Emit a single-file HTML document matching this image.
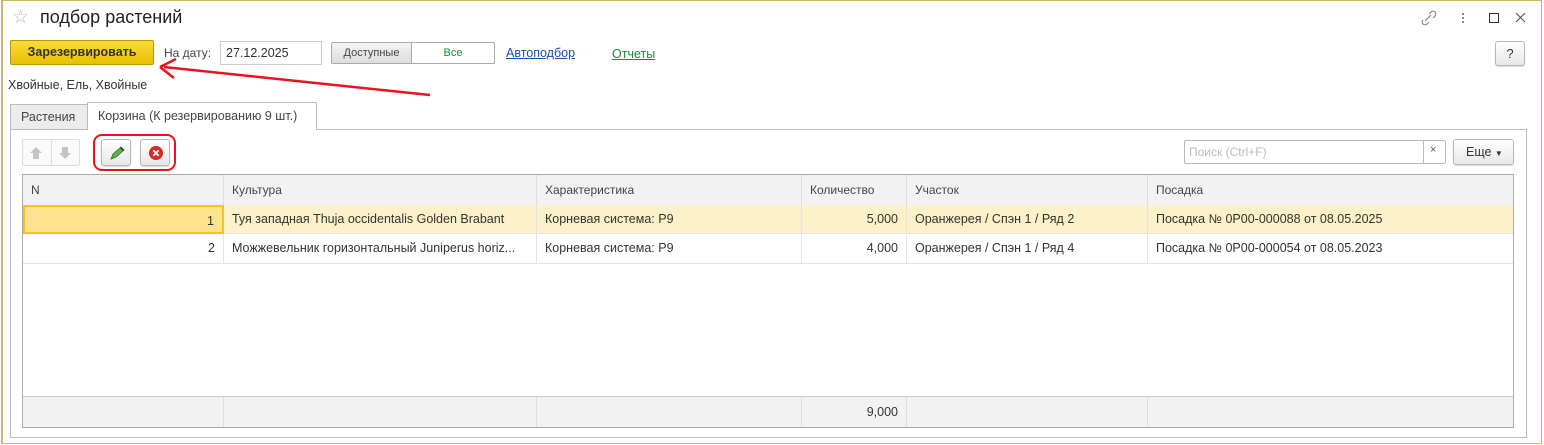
<!DOCTYPE html>
<html><head><meta charset="utf-8"><style>
*{box-sizing:border-box;margin:0;padding:0}
body{width:1544px;height:445px;background:#fff;font-family:"Liberation Sans",sans-serif;font-size:12px;color:#333;position:relative;overflow:hidden}
.a{position:absolute}
.win{left:1px;top:0;width:1541px;height:444px;border:1px solid #c9b865;border-left-width:2px}
.btn{border:1px solid #b8b8b8;border-radius:3px;background:linear-gradient(#fff,#e8e8e8);box-shadow:0 1px 1px rgba(0,0,0,.15)}
.th{position:absolute;top:0;height:30px;line-height:30px;padding-left:8px;border-right:1px solid #ddd;color:#444;background:#f2f2f2}
.td{position:absolute;height:29px;line-height:29px;padding:0 8px;border-right:1px solid #e4e4e4;white-space:nowrap;overflow:hidden;color:#333;font-size:12.5px}
.r{text-align:right}
</style></head><body>
<div class="a win"></div>
<div class="a" style="left:12px;top:6px;font-size:19px;color:#bbb">☆</div>
<div class="a" style="left:40px;top:7px;font-size:18px;color:#222">подбор растений</div>
<svg class="a" style="left:1420px;top:8px" width="110" height="20">
<g fill="none" stroke="#888" stroke-width="1.2"><path d="M5 13l6-6M3 12a2.5 2.5 0 0 0 4 4l2-2M9 6l2-2a2.5 2.5 0 0 1 4 4l-2 2"/></g>
<g fill="#888"><rect x="42" y="5" width="2" height="2"/><rect x="42" y="9" width="2" height="2"/><rect x="42" y="13" width="2" height="2"/></g>
<rect x="69.5" y="5.5" width="9" height="9" fill="none" stroke="#333"/>
<path d="M96 5l9 9M105 5l-9 9" stroke="#555" stroke-width="1.1"/>
</svg>
<div class="a" style="left:10px;top:40px;width:144px;height:25px;border:1px solid #b39a00;border-radius:2px;background:linear-gradient(#f8dc3a,#e8c000);font-weight:bold;font-size:12.5px;line-height:23px;text-align:center;color:#333">Зарезервировать</div>
<div class="a" style="left:164px;top:46px;color:#444">На дату:</div>
<div class="a" style="left:220px;top:41px;width:102px;height:24px;border:1px solid #ccc;padding-left:5px;line-height:22px;font-size:12.5px">27.12.2025</div>
<div class="a" style="left:331px;top:42px;width:164px;height:22px;border:1px solid #aaa;border-radius:2px;font-size:11px;line-height:20px">
<div class="a" style="left:0;top:0;width:80px;height:20px;background:linear-gradient(#f4f4f4,#ddd);border-right:1px solid #aaa;text-align:center;color:#444">Доступные</div>
<div class="a" style="left:80px;top:0;width:82px;text-align:center;color:#1a8a3a">Все</div></div>
<div class="a" style="left:506px;top:46px;color:#1d4fb4;text-decoration:underline;font-size:12.5px">Автоподбор</div>
<div class="a" style="left:612px;top:47px;color:#1a8a3a;text-decoration:underline;font-size:12.5px">Отчеты</div>
<div class="a btn" style="left:1495px;top:41px;width:30px;height:25px;text-align:center;line-height:23px;font-size:13px;color:#333">?</div>
<svg class="a" style="left:150px;top:55px" width="290" height="50"><path d="M280 40L14 12" stroke="#e8141c" stroke-width="2.5"/><path d="M10 12l16-8M10 12l14 11" stroke="#e8141c" stroke-width="2.5" fill="none"/></svg>
<div class="a" style="left:8px;top:78px;font-size:12.5px">Хвойные, Ель, Хвойные</div>
<div class="a" style="left:10px;top:129px;width:1517px;height:309px;border:1px solid #bbb"></div>
<div class="a" style="left:10px;top:104px;width:78px;height:26px;border:1px solid #bbb;background:#ececec;line-height:24px;padding-left:10px;font-size:12.5px;color:#444">Растения</div>
<div class="a" style="left:87px;top:102px;width:230px;height:28px;border:1px solid #bbb;border-bottom:none;background:#fff;line-height:26px;padding-left:10px;font-size:12.5px;color:#444">Корзина (К резервированию 9 шт.)</div>
<div class="a" style="left:22px;top:139px;width:58px;height:27px;border:1px solid #ddd;border-radius:2px;background:#fafafa"><div class="a" style="left:28px;top:0;width:1px;height:25px;background:#ddd"></div>
<svg class="a" style="left:6px;top:6px" width="46" height="14"><path d="M1 7l6-6 6 6h-3v6h-6v-6z M30 7l6 6 6-6h-3v-6h-6v6z" fill="#c4c4c4"/></svg></div>
<div class="a btn" style="left:101px;top:139px;width:30px;height:27px"><svg class="a" style="left:7px;top:6px" width="16" height="14"><path d="M2 13l2-5 8-7 3 3-8 7z" fill="#5db34c" stroke="#2f6c25" stroke-width=".8"/><path d="M11 2l3 3 1-1-3-3z" fill="#333"/></svg></div>
<div class="a btn" style="left:140px;top:139px;width:30px;height:27px"><svg class="a" style="left:7px;top:5px" width="16" height="16"><circle cx="8" cy="8" r="7" fill="#d42a2a"/><path d="M5.3 5.3l5.4 5.4M10.7 5.3l-5.4 5.4" stroke="#fff" stroke-width="1.8"/></svg></div>
<div class="a" style="left:93px;top:134px;width:83px;height:37px;border:2.5px solid #e8141c;border-radius:9px"></div>
<div class="a" style="left:1184px;top:140px;width:262px;height:24px;border:1px solid #bbb;border-radius:2px"><div class="a" style="left:4px;top:4px;color:#bbb">Поиск (Ctrl+F)</div><div class="a" style="left:238px;top:0;width:1px;height:22px;background:#bbb"></div><div class="a" style="left:245px;top:3px;color:#555;font-size:11px">×</div></div>
<div class="a btn" style="left:1453px;top:139px;width:61px;height:26px;line-height:24px;padding-left:12px;font-size:12.5px">Еще <span style="font-size:8px">▼</span></div>
<div class="a" style="left:22px;top:174px;width:1492px;height:254px;border:1px solid #aaa;overflow:hidden">
<div class="th" style="left:0;width:201px">N</div>
<div class="th" style="left:201px;width:313px">Культура</div>
<div class="th" style="left:514px;width:265px">Характеристика</div>
<div class="th" style="left:779px;width:105px">Количество</div>
<div class="th" style="left:884px;width:241px">Участок</div>
<div class="th" style="left:1125px;width:366px">Посадка</div>
<div class="a" style="left:0;top:30px;width:1491px;height:29px;background:#fcf1c8;border-bottom:1px solid #e4e4e4"></div>
<div class="td r" style="left:0;top:30px;width:201px;background:#fde38d;border:2px solid #f3c614">1</div>
<div class="td" style="left:201px;top:30px;width:313px">Туя западная Thuja occidentalis Golden Brabant</div>
<div class="td" style="left:514px;top:30px;width:265px">Корневая система: P9</div>
<div class="td r" style="left:779px;top:30px;width:105px">5,000</div>
<div class="td" style="left:884px;top:30px;width:241px">Оранжерея / Спэн 1 / Ряд 2</div>
<div class="td" style="left:1125px;top:30px;width:366px;border:none">Посадка № 0P00-000088 от 08.05.2025</div>
<div class="a" style="left:0;top:59px;width:1491px;height:30px;border-bottom:1px solid #e4e4e4"></div>
<div class="td r" style="left:0;top:59px;width:201px">2</div>
<div class="td" style="left:201px;top:59px;width:313px">Можжевельник горизонтальный Juniperus horiz...</div>
<div class="td" style="left:514px;top:59px;width:265px">Корневая система: P9</div>
<div class="td r" style="left:779px;top:59px;width:105px">4,000</div>
<div class="td" style="left:884px;top:59px;width:241px">Оранжерея / Спэн 1 / Ряд 4</div>
<div class="td" style="left:1125px;top:59px;width:366px;border:none">Посадка № 0P00-000054 от 08.05.2023</div>
<div class="a" style="left:0;top:221px;width:1491px;height:32px;background:#f2f2f2;border-top:1px solid #ccc">
<div class="td" style="left:0;top:0;width:201px;height:31px;border-color:#ddd"></div>
<div class="td" style="left:201px;top:0;width:313px;height:31px;border-color:#ddd"></div>
<div class="td" style="left:514px;top:0;width:265px;height:31px;border-color:#ddd"></div>
<div class="td r" style="left:779px;top:0;width:105px;height:31px;line-height:31px;border-color:#ddd">9,000</div>
<div class="td" style="left:884px;top:0;width:241px;height:31px;border-color:#ddd"></div>
</div></div>
</body></html>
